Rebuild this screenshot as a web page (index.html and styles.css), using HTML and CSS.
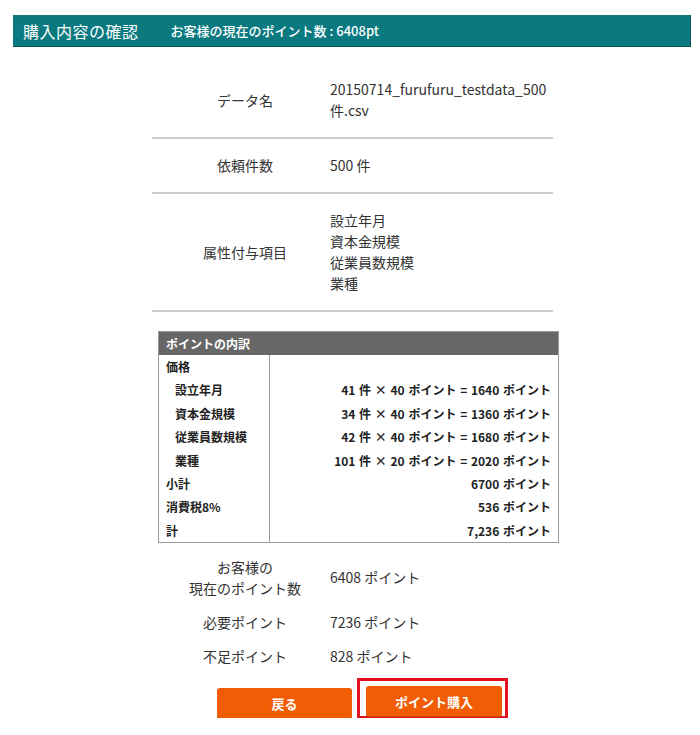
FILE: index.html
```html
<!DOCTYPE html>
<html lang="ja">
<head>
<meta charset="utf-8">
<title>購入内容の確認</title>
<link rel="stylesheet" href="styles.css">
</head>
<body>
<header class="bar">
  <h1 class="bar-title">購入内容の確認</h1>
  <span class="bar-points">お客様の現在のポイント数 : 6408pt</span>
</header>
<main class="content">
  <div class="info">
    <div class="info-row">
      <div class="info-label">データ名</div>
      <div class="info-value">20150714_furufuru_testdata_500<br>件.csv</div>
    </div>
    <div class="info-row">
      <div class="info-label">依頼件数</div>
      <div class="info-value">500 件</div>
    </div>
    <div class="info-row">
      <div class="info-label">属性付与項目</div>
      <div class="info-value">設立年月<br>資本金規模<br>従業員数規模<br>業種</div>
    </div>
  </div>

  <section class="breakdown">
    <div class="breakdown-head">ポイントの内訳</div>
    <div class="breakdown-body">
      <div class="bd-left">
        <div class="bd-line">価格</div>
        <div class="bd-line sub">設立年月</div>
        <div class="bd-line sub">資本金規模</div>
        <div class="bd-line sub">従業員数規模</div>
        <div class="bd-line sub">業種</div>
        <div class="bd-line">小計</div>
        <div class="bd-line">消費税8%</div>
        <div class="bd-line">計</div>
      </div>
      <div class="bd-right">
        <div class="bd-line"></div>
        <div class="bd-line">41 件 × 40 ポイント = 1640 ポイント</div>
        <div class="bd-line">34 件 × 40 ポイント = 1360 ポイント</div>
        <div class="bd-line">42 件 × 40 ポイント = 1680 ポイント</div>
        <div class="bd-line">101 件 × 20 ポイント = 2020 ポイント</div>
        <div class="bd-line">6700 ポイント</div>
        <div class="bd-line">536 ポイント</div>
        <div class="bd-line">7,236 ポイント</div>
      </div>
    </div>
  </section>

  <div class="summary">
    <div class="sum-row">
      <div class="info-label">お客様の<br>現在のポイント数</div>
      <div class="info-value">6408 ポイント</div>
    </div>
    <div class="sum-row">
      <div class="info-label">必要ポイント</div>
      <div class="info-value">7236 ポイント</div>
    </div>
    <div class="sum-row">
      <div class="info-label">不足ポイント</div>
      <div class="info-value">828 ポイント</div>
    </div>
  </div>
</main>
<div class="actions">
  <button class="btn">戻る</button>
  <span class="highlight"><button class="btn">ポイント購入</button></span>
</div>
</body>
</html>
```

FILE: styles.css
```css
* { box-sizing: border-box; }
html, body { margin: 0; padding: 0; background: #fff; }
body {
  font-family: "Noto Sans CJK JP", "Noto Sans", sans-serif;
  color: #333;
  width: 700px;
}
.bar {
  margin: 15px 0 0 13px;
  width: 678px;
  height: 32px;
  background: #0b7a80;
  border-right: 1px solid #07545a;
  border-bottom: 1px solid #07545a;
  display: flex;
  align-items: center;
  padding-left: 10px;
  color: #fff;
}
.bar-title {
  margin: 0;
  font-size: 16px;
  font-weight: 400;
  line-height: 1;
  letter-spacing: 0.5px;
}
.bar-points {
  margin-left: 32px;
  font-size: 13px;
  font-weight: 500;
}
.content {
  margin: 16px 0 0 152px;
  width: 407px;
}
.info { width: 401px; }
.info-row {
  display: grid;
  grid-template-columns: 178px 1fr;
  align-items: center;
  padding: 16px 0;
  border-bottom: 2px solid #ccc;
  font-size: 14px;
  line-height: 21px;
}
.info-label {
  text-align: center;
  padding-left: 8px;
}
.info-value { text-align: left; }
.breakdown {
  margin: 19px 0 0 6px;
  width: 401px;
  border: 1px solid #999;
  font-size: 12px;
  font-weight: 700;
  color: #222;
}
.breakdown-head {
  background: #676767;
  color: #fff;
  height: 23px;
  line-height: 23px;
  padding-left: 7px;
}
.breakdown-body {
  display: grid;
  grid-template-columns: 111px 1fr;
}
.bd-left {
  border-right: 1px solid #999;
  padding-left: 7px;
}
.bd-right {
  text-align: right;
  padding-right: 7px;
  word-spacing: 1px;
}
.bd-line {
  height: 23.4px;
  line-height: 23.4px;
  white-space: nowrap;
}
.bd-line.sub { padding-left: 9px; }
.summary {
  margin-top: 7px;
  width: 401px;
}
.sum-row {
  display: grid;
  grid-template-columns: 178px 1fr;
  align-items: center;
  padding: 6.5px 0;
  font-size: 14px;
  line-height: 21px;
}
.actions {
  display: flex;
  align-items: flex-end;
  margin: 5px 0 0 217px;
  gap: 5px;
}
.btn {
  width: 136px;
  height: 30px;
  border: none;
  border-radius: 3px;
  background: #f25c05;
  box-shadow: 0 1px 0 #c84a04;
  color: #fff;
  font-family: "Noto Sans CJK JP", sans-serif;
  font-size: 13px;
  font-weight: 700;
  padding: 0;
}
.actions > .btn { width: 135px; }
.highlight {
  display: flex;
  border: 3px solid #e3101f;
  border-bottom-width: 2px;
  padding: 5px 3px 0 6px;
}
```
